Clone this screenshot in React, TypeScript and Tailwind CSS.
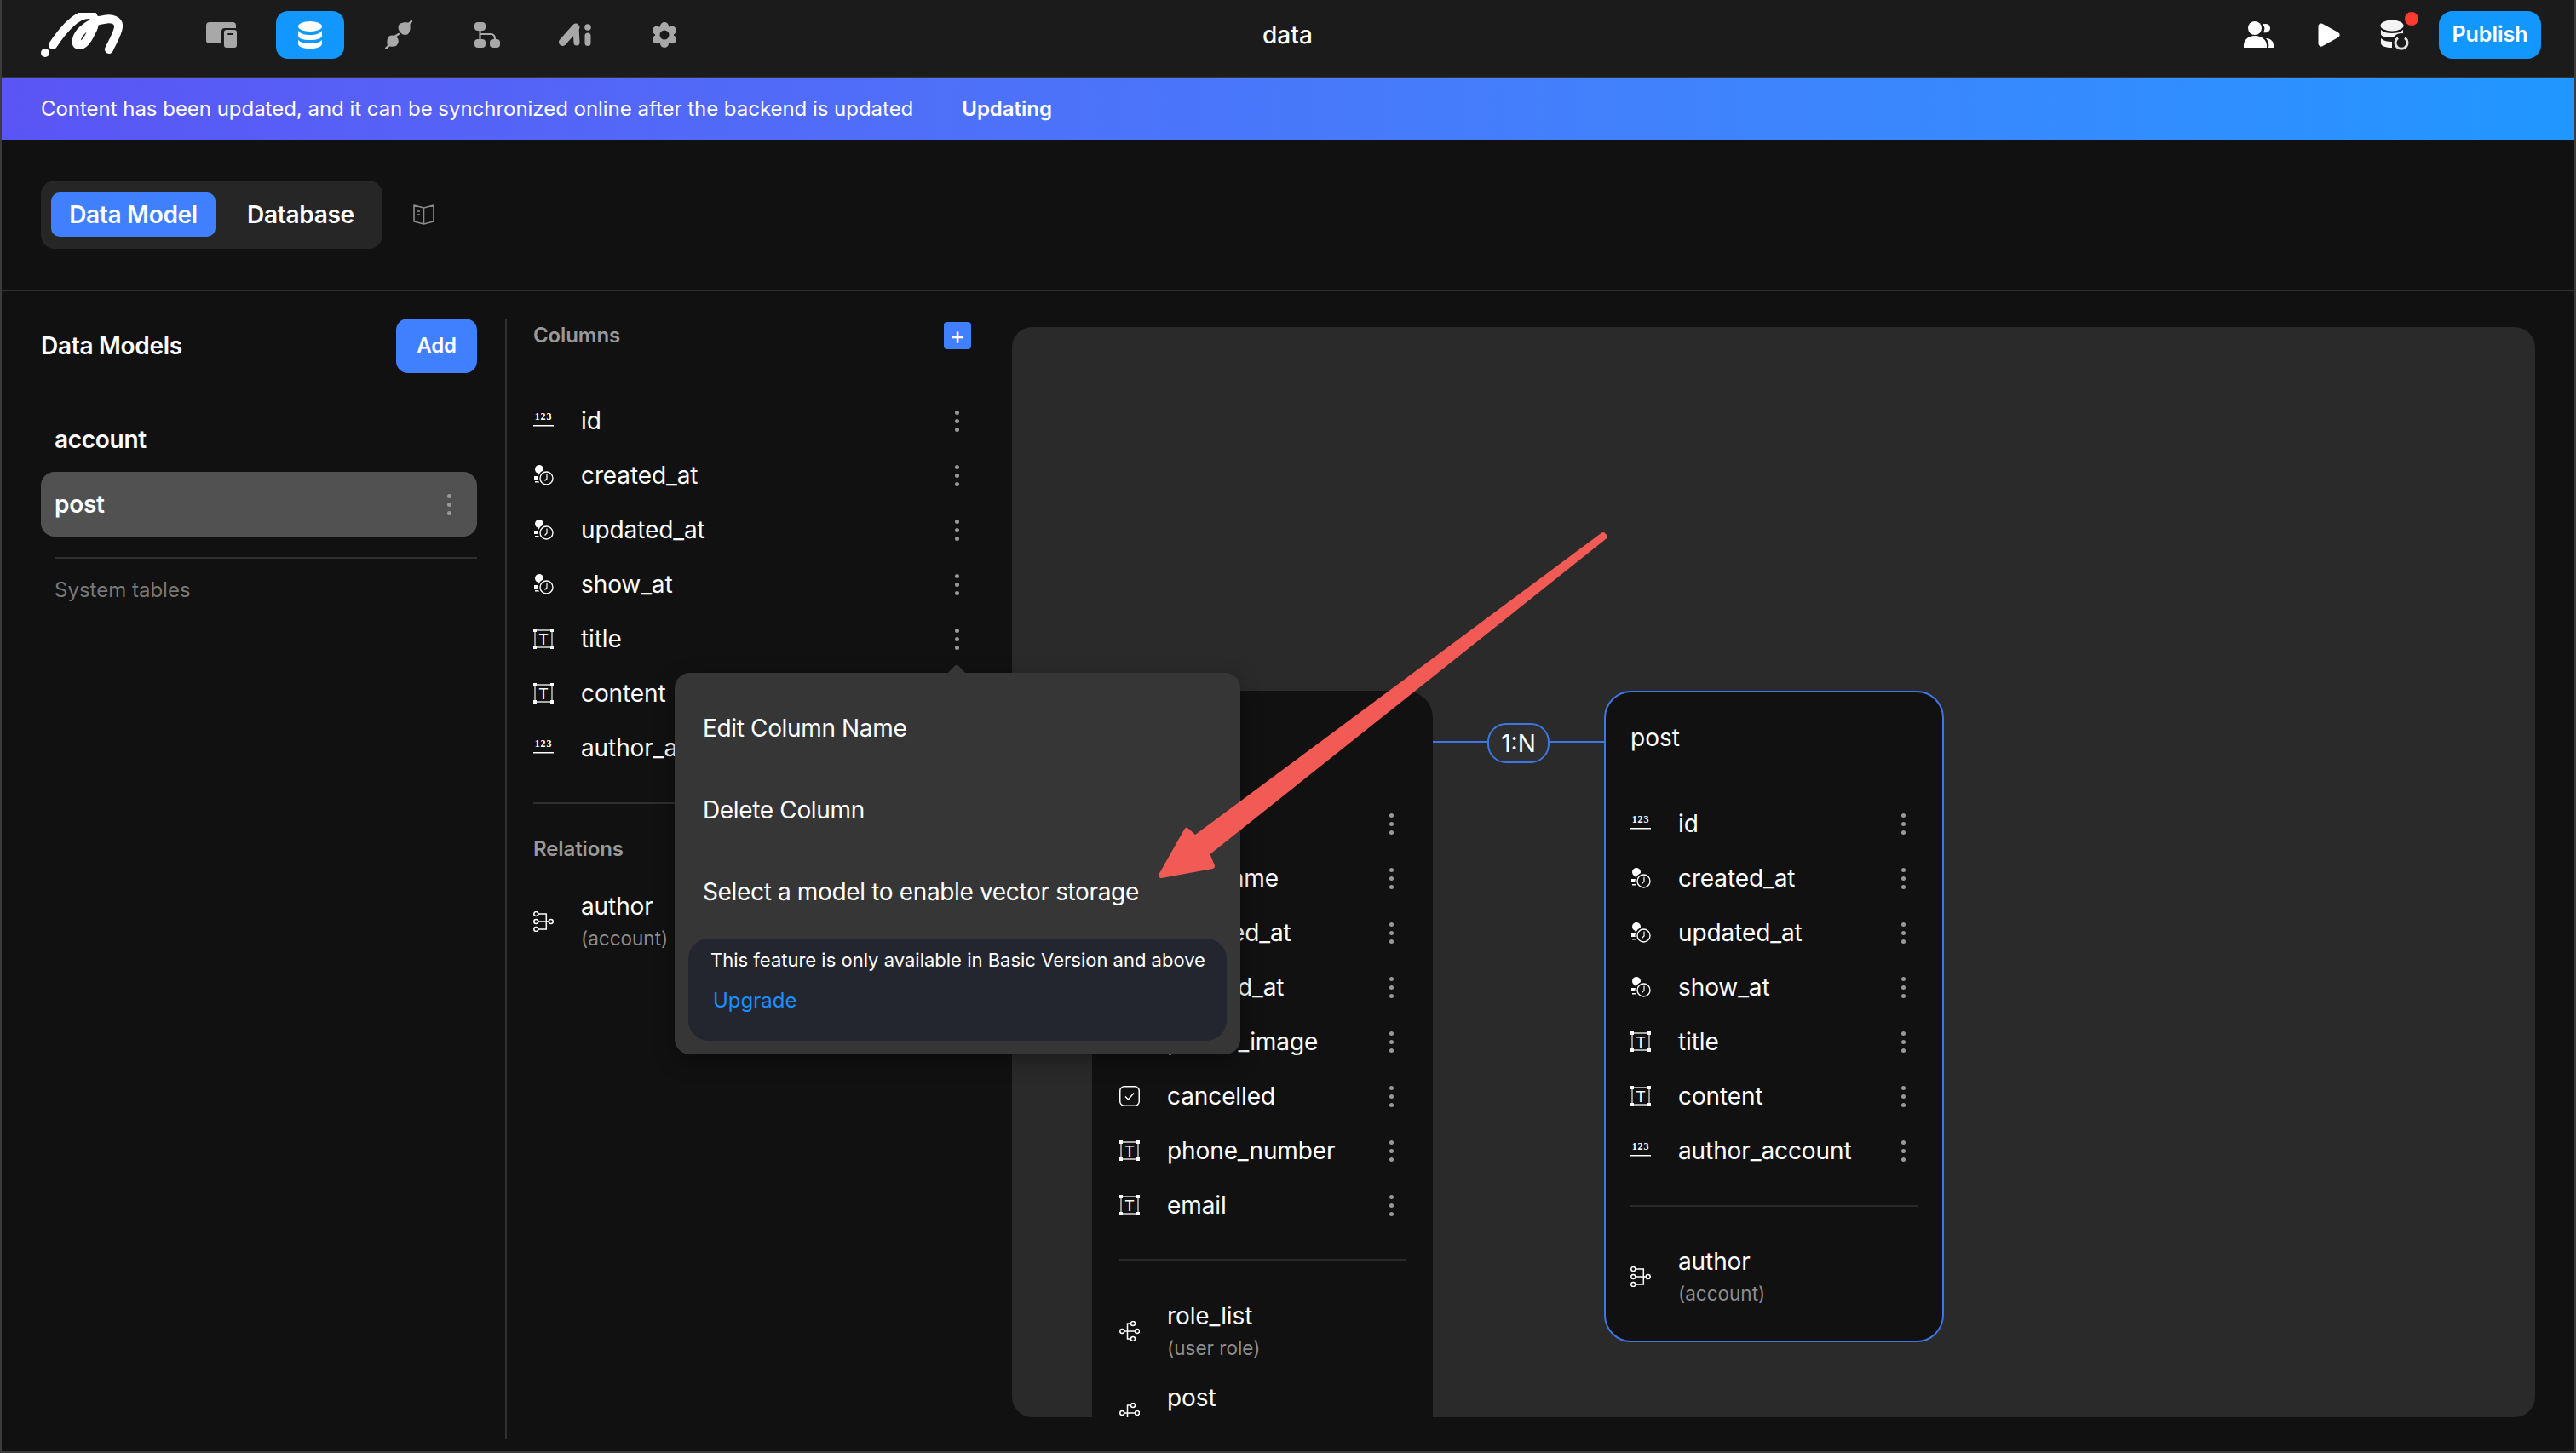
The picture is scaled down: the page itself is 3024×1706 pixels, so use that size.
import type { ReactNode } from 'react';

function Logo() {
  return (
    <svg viewBox="48 15 96 52" className="w-[96px] h-[52px]" fill="none">
      <circle cx="53" cy="62" r="5" fill="#fff" />
      <path
        d="M62 53C72 38 88 17 104 17C114 17 112 30 107 38C103 47 98 54 92 53C87 52 90 41 97 35C104 29 112 24 122 23C132 21 140 24 139 32C138 40 132 49 128 58"
        stroke="#fff"
        strokeWidth="10"
        strokeLinecap="round"
      />
    </svg>
  );
}

function PagesIcon() {
  return (
    <svg viewBox="242 28 36 30" className="w-[36px] h-[30px]">
      <rect x="242" y="28" width="35" height="25" rx="4" fill="#a8a8a8" />
      <rect x="260" y="35" width="20" height="25" rx="4" fill="#1b1b1b" />
      <rect x="263" y="37" width="15" height="21" rx="3" fill="#a8a8a8" />
      <rect x="267" y="41" width="7" height="2" rx="1" fill="#1b1b1b" />
    </svg>
  );
}

function DatabaseIcon() {
  return (
    <svg viewBox="0 0 30 32" className="w-[30px] h-[32px]" fill="#fff">
      <ellipse cx="15" cy="6" rx="14" ry="6" />
      <path d="M1 11C4 15 9 16 15 16S26 15 29 11V17C29 20 23 22 15 22S1 20 1 17Z" />
      <path d="M1 22C4 25 9 26 15 26S26 25 29 22V26C29 30 23 32 15 32S1 30 1 26Z" />
    </svg>
  );
}

function PlugIcon() {
  return (
    <svg viewBox="452 24 32 34" className="w-[32px] h-[34px]" fill="#a8a8a8">
      <path d="M469 28C473 26 478 26 481 27C482 31 482 37 479 40C476 42 472 41 470 38C467 35 467 31 469 28Z" />
      <path d="M480 28L483 25" stroke="#a8a8a8" strokeWidth="2.5" strokeLinecap="round" />
      <path d="M456 43C460 41 463 41 466 44C469 47 468 51 465 54C462 55 458 55 455 54C454 50 454 46 456 43Z" />
      <path d="M456 54L453 57M463 43L468 40" stroke="#a8a8a8" strokeWidth="2.5" strokeLinecap="round" />
    </svg>
  );
}

function TreeIcon() {
  return (
    <svg viewBox="557 26 30 30" className="w-[30px] h-[30px]" fill="#a8a8a8">
      <rect x="557" y="26" width="13" height="10" rx="4" />
      <rect x="557" y="46" width="13" height="10" rx="4" />
      <rect x="575" y="46" width="12" height="10" rx="4" />
      <path d="M563.5 36V46M563.5 40H576C579 40 581 42 581 46" fill="none" stroke="#a8a8a8" strokeWidth="2.2" />
    </svg>
  );
}

function AiIcon() {
  return (
    <svg viewBox="657 27 40 28" className="w-[40px] h-[28px]" fill="none" stroke="#a8a8a8" strokeLinecap="round">
      <line x1="661.5" y1="49.5" x2="677" y2="32" strokeWidth="9" />
      <line x1="677" y1="32" x2="678" y2="50" strokeWidth="7" />
      <line x1="691" y1="42" x2="691" y2="50.5" strokeWidth="7" />
      <circle cx="691" cy="32" r="3.8" fill="#a8a8a8" stroke="none" />
    </svg>
  );
}

function GearIcon() {
  return (
    <svg viewBox="0 0 30 30" className="w-[30px] h-[30px]" fill="#a8a8a8">
      <circle cx="15" cy="15" r="11" />
      <circle cx="15" cy="5" r="5" />
      <circle cx="15" cy="25" r="5" />
      <circle cx="6" cy="9.8" r="5" />
      <circle cx="24" cy="9.8" r="5" />
      <circle cx="6" cy="20.2" r="5" />
      <circle cx="24" cy="20.2" r="5" />
      <circle cx="15" cy="15" r="5.5" fill="#1b1b1b" />
    </svg>
  );
}

function UsersIcon() {
  return (
    <svg viewBox="2633 25 38 32" className="w-[38px] h-[32px]" fill="#fff">
      <circle cx="2647" cy="33" r="8" />
      <path d="M2634 56C2633 47 2639 42 2647 42C2655 42 2662 47 2661 56Z" />
      <path d="M2656 28.5C2661 27 2665 29 2665 33C2665 37 2661 39 2657 38C2659 35 2659 31 2656 28.5Z" />
      <path d="M2660 45C2666 45 2670 49 2669 56H2663C2664 52 2663 48 2660 45Z" />
    </svg>
  );
}

function PlayIcon() {
  return (
    <svg viewBox="0 0 26 28" className="w-[26px] h-[28px]">
      <path d="M4 4L22 14L4 24Z" fill="#fff" stroke="#fff" strokeWidth="7" strokeLinejoin="round" />
    </svg>
  );
}

function SyncIcon() {
  return (
    <svg viewBox="2794 22 36 37" className="w-[36px] h-[37px]" fill="#f4f4f4">
      <ellipse cx="2808" cy="29" rx="13.5" ry="6.5" />
      <path d="M2795 34C2798 37 2803 38 2808 38S2818 37 2821 34V39C2818 42 2814 43 2808 43S2795 42 2795 39Z" />
      <path d="M2795 44C2798 47 2803 48 2808 48V55C2801 55 2795 53 2795 50Z" />
      <circle cx="2819" cy="49" r="11" fill="#1b1b1b" />
      <path d="M2823 43.5A7 7 0 1 1 2815 43.5" fill="none" stroke="#e0e0e0" strokeWidth="3" />
    </svg>
  );
}

function BookIcon() {
  return (
    <svg viewBox="0 0 25 24" className="w-[25px] h-[24px]" fill="none" stroke="#8a8a8a" strokeWidth="1.6" strokeLinejoin="round">
      <path d="M12.5 4L1 1V20L12.5 23L24 20V1L12.5 4V23" />
      <path d="M5 8H8M5 12H8" />
    </svg>
  );
}

function NumberIcon() {
  return (
    <svg viewBox="0 0 24 24" className="w-[24px] h-[24px] shrink-0" fill="#fff">
      <text x="12" y="11" textAnchor="middle" fontSize="12" fontWeight="700" fontFamily="Liberation Serif, serif" letterSpacing="0.8">
        123
      </text>
      <rect x="0" y="17" width="24" height="1.5" />
    </svg>
  );
}

function TimeIcon() {
  return (
    <svg viewBox="0 0 24 24" className="w-[24px] h-[24px] shrink-0" fill="#fff">
      <circle cx="7" cy="5" r="5" />
      <path d="M5 9L10 10L7 14Z" />
      <rect x="1" y="13" width="5" height="4" />
      <rect x="2" y="19" width="5" height="1.5" />
      <circle cx="15.5" cy="15.5" r="10" fill="#111111" />
      <circle cx="15.5" cy="15.5" r="7.5" fill="none" stroke="#fff" strokeWidth="1.4" />
      <path d="M16 10.5V16L13.5 18.5" fill="none" stroke="#fff" strokeWidth="1.2" />
    </svg>
  );
}

function TextIcon() {
  return (
    <svg viewBox="0 0 24 24" className="w-[24px] h-[24px] shrink-0" fill="#fff">
      <path d="M2 2H22V22H2Z" fill="none" stroke="#dddddd" strokeWidth="1.3" />
      <rect x="0" y="0" width="4" height="4" />
      <rect x="20" y="0" width="4" height="4" />
      <rect x="0" y="20" width="4" height="4" />
      <rect x="20" y="20" width="4" height="4" />
      <text x="12" y="18.8" textAnchor="middle" fontSize="18" fontFamily="Liberation Sans, sans-serif">
        T
      </text>
    </svg>
  );
}

function CheckIcon() {
  return (
    <svg viewBox="0 0 24 24" className="w-[24px] h-[24px] shrink-0" fill="none" stroke="#fff">
      <rect x="0.75" y="0.75" width="22.5" height="22.5" rx="5" strokeWidth="1.5" />
      <path d="M7 12.5L10.5 16L17 8.5" strokeWidth="1.5" />
    </svg>
  );
}

function ManyIcon() {
  return (
    <svg viewBox="0 0 24 24" className="w-[24px] h-[24px] shrink-0" fill="none" stroke="#fff" strokeWidth="1.5">
      <circle cx="3.3" cy="12" r="2.5" />
      <circle cx="16" cy="3" r="2.5" />
      <circle cx="21" cy="12" r="2.5" />
      <circle cx="16" cy="21" r="2.5" />
      <path d="M6 12H18.5M13.5 3H9.5V21H13.5" />
    </svg>
  );
}

function OneIcon() {
  return (
    <svg viewBox="0 0 24 24" className="w-[24px] h-[24px] shrink-0" fill="none" stroke="#fff" strokeWidth="1.5">
      <circle cx="3.3" cy="3" r="2.5" />
      <circle cx="3.3" cy="12" r="2.5" />
      <circle cx="3.3" cy="21" r="2.5" />
      <circle cx="20.7" cy="12" r="2.5" />
      <path d="M6 3H15.3V21H6M6 12H18" />
    </svg>
  );
}

function Dots() {
  return (
    <div className="flex flex-col gap-[5px]">
      <div className="w-[5px] h-[5px] rounded-full bg-[#9a9a9a]" />
      <div className="w-[5px] h-[5px] rounded-full bg-[#9a9a9a]" />
      <div className="w-[5px] h-[5px] rounded-full bg-[#9a9a9a]" />
    </div>
  );
}

function ColumnRow({ icon, name }: { icon: ReactNode; name: string }) {
  return (
    <div className="flex items-center h-[64px] pr-[14px]">
      {icon}
      <span className="ml-[32px] flex-1 text-[28px] leading-[40px] tracking-[-0.1px] text-white">{name}</span>
      <Dots />
    </div>
  );
}

function RelationRow({ icon, name, target }: { icon: ReactNode; name: string; target?: string }) {
  return (
    <div className="flex items-center h-[96px]">
      {icon}
      <div className="ml-[32px]">
        <div className="text-[28px] leading-[40px] tracking-[-0.1px] text-white">{name}</div>
        <div className="h-[36px] text-[22.5px] leading-[36px] text-[#8c8c8c]">{target}</div>
      </div>
    </div>
  );
}

const postColumns = [
  { icon: <NumberIcon />, name: 'id' },
  { icon: <TimeIcon />, name: 'created_at' },
  { icon: <TimeIcon />, name: 'updated_at' },
  { icon: <TimeIcon />, name: 'show_at' },
  { icon: <TextIcon />, name: 'title' },
  { icon: <TextIcon />, name: 'content' },
  { icon: <NumberIcon />, name: 'author_account' },
];

const accountColumns = [
  { icon: <NumberIcon />, name: 'id' },
  { icon: <TextIcon />, name: 'username' },
  { icon: <TimeIcon />, name: 'updated_at' },
  { icon: <TimeIcon />, name: 'created_at' },
  { icon: <TextIcon />, name: 'profile_image' },
  { icon: <CheckIcon />, name: 'cancelled' },
  { icon: <TextIcon />, name: 'phone_number' },
  { icon: <TextIcon />, name: 'email' },
];

export default function App() {
  return (
    <div className="relative flex flex-col w-[3024px] h-[1706px] overflow-hidden bg-[#111111] font-['Inter',sans-serif] text-white">
      {/* top bar */}
      <header className="relative flex items-center h-[92px] shrink-0 pb-[8px] pl-[48px] pr-[41px] bg-[#1b1b1b] border-b-2 border-[#333333]">
        <Logo />
        <nav className="flex items-center gap-[24px] ml-[76px]">
          <div className="flex items-center justify-center w-[80px] h-[56px]">
            <PagesIcon />
          </div>
          <div className="flex items-center justify-center w-[80px] h-[56px] rounded-[14px] bg-[#1297ff]">
            <DatabaseIcon />
          </div>
          <div className="flex items-center justify-center w-[80px] h-[56px]">
            <PlugIcon />
          </div>
          <div className="flex items-center justify-center w-[80px] h-[56px]">
            <TreeIcon />
          </div>
          <div className="flex items-center justify-center w-[80px] h-[56px]">
            <AiIcon />
          </div>
          <div className="flex items-center justify-center w-[80px] h-[56px]">
            <GearIcon />
          </div>
        </nav>
        <div className="absolute left-[1482px] top-[21px] text-[28px] leading-[40px] font-medium">data</div>
        <div className="flex items-center ml-auto">
          <UsersIcon />
          <div className="ml-[50px]">
            <PlayIcon />
          </div>
          <div className="relative ml-[47px]">
            <SyncIcon />
            <div className="absolute -top-[9px] right-[-9px] w-[16px] h-[16px] rounded-full bg-[#ff3b30]" />
          </div>
          <button className="ml-[33px] w-[120px] h-[56px] rounded-[16px] bg-[#1297ff] text-[25px] font-semibold text-white">
            Publish
          </button>
        </div>
      </header>

      {/* update banner */}
      <div className="flex items-center h-[72px] shrink-0 pl-[48px] gap-[57px] bg-linear-to-r from-[#5a55f5] to-[#1f97ff] text-[24px] tracking-[-0.03px]">
        <span>Content has been updated, and it can be synchronized online after the backend is updated</span>
        <span className="font-semibold">Updating</span>
      </div>

      {/* tabs */}
      <div className="flex items-center h-[178px] shrink-0 pl-[48px] border-b-2 border-[#2f2f2f]">
        <div className="flex items-center h-[80px] w-[401px] pl-[12px] rounded-[16px] bg-[#262626] text-[28px] font-semibold tracking-[-0.3px]">
          <div className="flex items-center justify-center w-[193px] h-[52px] rounded-[10px] bg-[#4080ff]">Data Model</div>
          <span className="ml-[37px]">Database</span>
        </div>
        <div className="ml-[36px]">
          <BookIcon />
        </div>
      </div>

      <div className="flex flex-1 min-h-0">
        {/* model list */}
        <aside className="w-[512px] ml-[48px] pt-[32px] shrink-0">
          <div className="flex items-center justify-between h-[64px]">
            <h2 className="text-[28px] font-semibold tracking-[-0.3px]">Data Models</h2>
            <button className="w-[95px] h-[64px] rounded-[14px] bg-[#4080ff] text-[24px] font-semibold tracking-[-0.2px] text-white">
              Add
            </button>
          </div>
          <div className="flex items-center h-[76px] mt-[40px] pl-[16px] text-[28px] font-semibold tracking-[-0.3px]">account</div>
          <div className="flex items-center justify-between h-[76px] pl-[16px] pr-[30px] rounded-[16px] bg-[#515151] text-[28px] font-semibold tracking-[-0.3px]">
            post
            <Dots />
          </div>
          <div className="h-[2px] mt-[24px] ml-[16px] bg-[#2f2f2f]" />
          <div className="mt-[19px] ml-[16px] text-[24px] leading-[36px] text-[#777777]">System tables</div>
        </aside>

        <div className="w-[2px] shrink-0 ml-[33px] mt-[32px] mb-[16px] bg-[#2f2f2f]" />

        {/* columns */}
        <section className="w-[514px] shrink-0 ml-[31px] pt-[32px]">
          <div className="flex items-center justify-between h-[40px]">
            <span className="text-[24px] font-semibold tracking-[-0.1px] text-[#999999]">Columns</span>
            <div className="flex items-center justify-center w-[32px] h-[32px] rounded-[4px] bg-[#4080ff] text-[28px] leading-none">+</div>
          </div>
          <div className="mt-[48px]">
            {postColumns.map((c) => (
              <ColumnRow key={c.name} icon={c.icon} name={c.name} />
            ))}
          </div>
          <div className="h-[2px] mt-[32px] bg-[#2f2f2f]" />
          <div className="mt-[35px] text-[24px] leading-[36px] font-semibold tracking-[-0.1px] text-[#999999]">Relations</div>
          <div className="mt-[19px]">
            <RelationRow icon={<OneIcon />} name="author" target="(account)" />
          </div>
        </section>

        {/* diagram canvas */}
        <main className="relative w-[1788px] shrink-0 ml-[48px] mt-[42px] mb-[42px] rounded-[24px] bg-[#2a2a2a] overflow-hidden">
          <div className="absolute left-[94px] top-[427px] w-[400px] h-[900px] px-[32px] rounded-[32px] bg-[#111111]">
            <div className="mt-[36px] h-[40px] text-[28px] leading-[40px]">account</div>
            <div className="mt-[48px]">
              {accountColumns.map((c) => (
                <ColumnRow key={c.name} icon={c.icon} name={c.name} />
              ))}
            </div>
            <div className="h-[2px] mt-[31px] mb-[35px] bg-[#2a2a2a]" />
            <RelationRow icon={<ManyIcon />} name="role_list" target="(user role)" />
            <RelationRow icon={<ManyIcon />} name="post" />
          </div>

          <div className="absolute left-[494px] top-[486px] w-[201px] h-[2px] bg-[#3f76e6]" />
          <div className="absolute left-[558px] top-[465px] flex items-center justify-center w-[73px] h-[47px] rounded-[22px] border-2 border-[#3f76e6] bg-[#2f2f2f] text-[28px]">
            1:N
          </div>

          <div className="absolute left-[695px] top-[427px] w-[399px] h-[765px] px-[29px] rounded-[32px] border-2 border-[#3f76e6] bg-[#111111]">
            <div className="mt-[33px] h-[40px] text-[28px] leading-[40px]">post</div>
            <div className="mt-[49px]">
              {postColumns.map((c) => (
                <ColumnRow key={c.name} icon={c.icon} name={c.name} />
              ))}
            </div>
            <div className="h-[2px] mt-[32px] mb-[34px] bg-[#2a2a2a]" />
            <RelationRow icon={<OneIcon />} name="author" target="(account)" />
          </div>
        </main>
      </div>

      {/* column menu */}
      <div className="absolute left-[792px] top-[790px] w-[664px] h-[448px] pt-[17px] rounded-[18px] bg-[#363636] shadow-[0_8px_24px_rgba(0,0,0,0.35)]">
        <div className="absolute left-[323px] top-[-7px] w-[16px] h-[16px] rotate-45 rounded-[3px] bg-[#363636]" />
        <div className="flex items-center h-[96px] pl-[33px] text-[28px] tracking-[-0.35px]">Edit Column Name</div>
        <div className="flex items-center h-[96px] pl-[33px] text-[28px] tracking-[-0.35px]">Delete Column</div>
        <div className="flex items-center h-[96px] pl-[33px] text-[28px] tracking-[-0.35px]">Select a model to enable vector storage</div>
        <div className="h-[120px] mt-[7px] mx-[16px] pt-[7px] pl-[26px] rounded-[24px] bg-[#23262f]">
          <div className="text-[22px] leading-[36px] whitespace-nowrap">
            This feature is only available in Basic Version and above
          </div>
          <div className="mt-[12px] pl-[3px] text-[24px] leading-[36px] text-[#1a8fff]">Upgrade</div>
        </div>
      </div>

      {/* annotation arrow */}
      <svg viewBox="0 0 3024 1706" className="absolute inset-0 w-[3024px] h-[1706px] pointer-events-none">
        <polygon
          points="1882,628 1884,630 1417,1002 1423,1017 1363,1028 1393,975 1403,984"
          fill="#f25a55"
          stroke="#f25a55"
          strokeWidth="6"
          strokeLinejoin="round"
        />
      </svg>

      {/* window edge */}
      <div className="absolute inset-0 border-x-2 border-b-2 border-[#3c3c3c] pointer-events-none" />
    </div>
  );
}
